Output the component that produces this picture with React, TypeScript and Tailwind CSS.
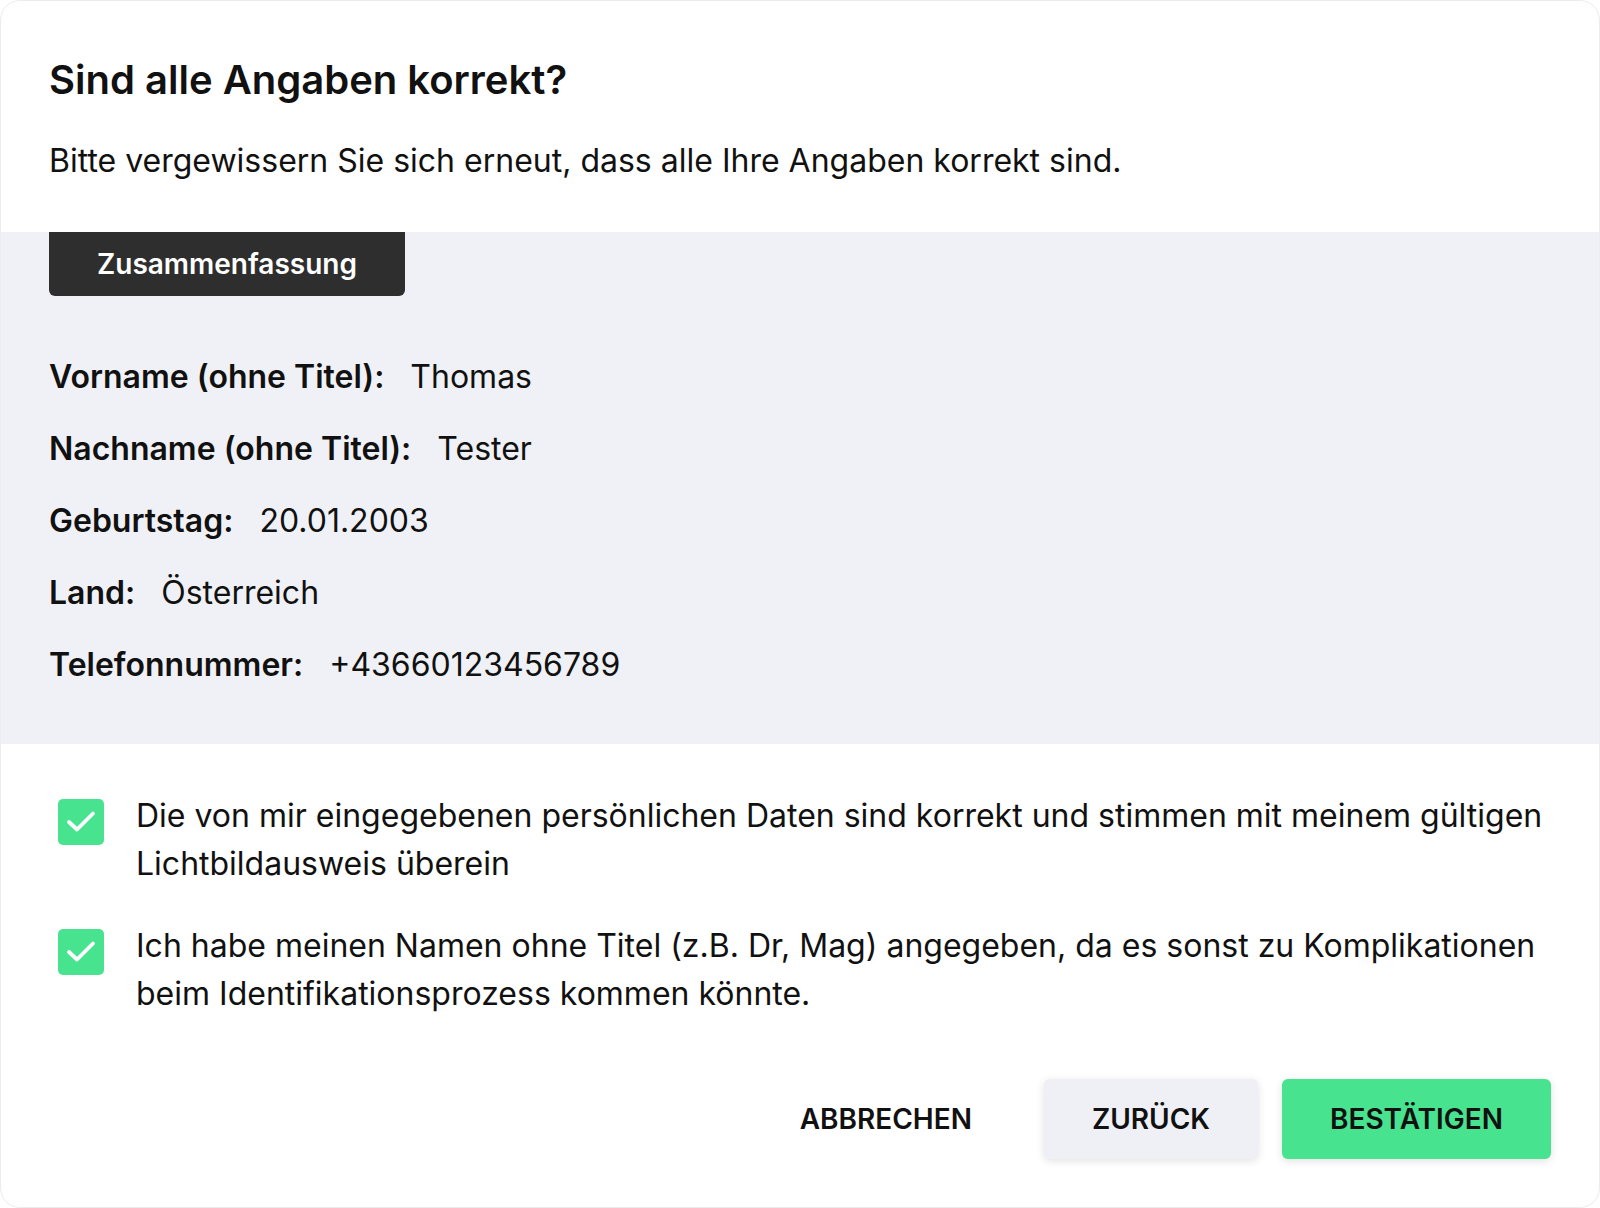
const ROWS: { label: string; value: string }[] = [
  { label: 'Vorname (ohne Titel):', value: 'Thomas' },
  { label: 'Nachname (ohne Titel):', value: 'Tester' },
  { label: 'Geburtstag:', value: '20.01.2003' },
  { label: 'Land:', value: 'Österreich' },
  { label: 'Telefonnummer:', value: '+43660123456789' },
]

const CHECKS = [
  'Die von mir eingegebenen persönlichen Daten sind korrekt und stimmen mit meinem gültigen Lichtbildausweis überein',
  'Ich habe meinen Namen ohne Titel (z.B. Dr, Mag) angegeben, da es sonst zu Komplikationen beim Identifikationsprozess kommen könnte.',
]

function Check() {
  return (
    <div className="w-[46px] h-[46px] shrink-0 mt-[7px] rounded-[5px] bg-[#48e38f]">
      <svg width="46" height="46" viewBox="0 0 46 46" fill="none" stroke="white" strokeWidth="3.8" strokeLinecap="round" strokeLinejoin="round">
        <path d="M11 23l8 7.5L35 14.5" />
      </svg>
    </div>
  )
}

export default function App() {
  return (
    <div className="w-[1600px] h-[1208px] bg-white font-['Inter',sans-serif] text-[#111]">
      <div className="h-full rounded-[20px] border border-[#ececf0] bg-white overflow-hidden flex flex-col">
        {/* Header */}
        <div className="px-[48px] pt-[57px] pb-[51px]">
          <h1 className="text-[40px] leading-[44px] font-semibold">Sind alle Angaben korrekt?</h1>
          <p className="mt-[39px] text-[32px] leading-[40px]">
            Bitte vergewissern Sie sich erneut, dass alle Ihre Angaben korrekt sind.
          </p>
        </div>

        {/* Summary */}
        <div className="bg-[#f0f1f6] px-[48px] pb-[59px]">
          <div className="inline-flex items-center h-[64px] px-[48px] rounded-b-[6px] bg-[#2e2e2e] text-white text-[28px] font-semibold">
            Zusammenfassung
          </div>
          <div className="mt-[61px] flex flex-col gap-[32px]">
            {ROWS.map(r => (
              <div key={r.label} className="flex text-[32px] leading-[40px]">
                <span className="font-semibold mr-[26px]">{r.label}</span>
                <span>{r.value}</span>
              </div>
            ))}
          </div>
        </div>

        {/* Confirmations */}
        <div className="px-[48px] pt-[48px] flex flex-col gap-[34px]">
          {CHECKS.map(t => (
            <div key={t} className="flex gap-[32px] pl-[9px]">
              <Check />
              <p className="text-[32px] leading-[48px]">{t}</p>
            </div>
          ))}
        </div>

        {/* Actions */}
        <div className="mt-auto px-[48px] pb-[48px] flex justify-end gap-[24px]">
          <button className="h-[80px] px-[48px] text-[28px] font-semibold uppercase">Abbrechen</button>
          <button className="h-[80px] px-[48px] rounded-[6px] bg-[#eff0f5] text-[28px] font-semibold shadow-[0_2px_8px_rgba(0,0,0,0.12)]">
            ZURÜCK
          </button>
          <button className="h-[80px] px-[48px] rounded-[6px] bg-[#48e38f] text-[28px] font-semibold shadow-[0_2px_8px_rgba(0,0,0,0.12)]">
            BESTÄTIGEN
          </button>
        </div>
      </div>
    </div>
  )
}
